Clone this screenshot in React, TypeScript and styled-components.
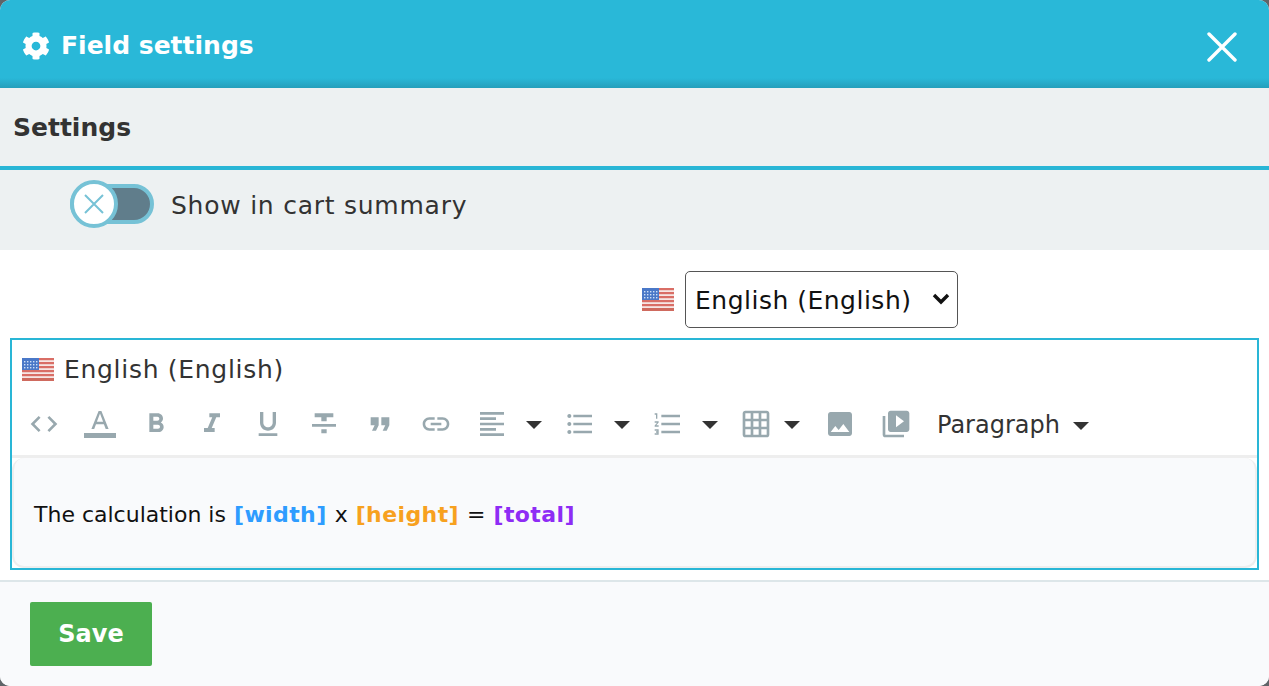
import React from "react";
import styled, { createGlobalStyle } from "styled-components";
import { FaCog } from "react-icons/fa";
import {
  MdCode,
  MdFormatAlignLeft,
  MdFormatBold,
  MdFormatItalic,
  MdFormatListBulleted,
  MdFormatListNumbered,
  MdFormatQuote,
  MdFormatStrikethrough,
  MdFormatUnderlined,
  MdGridOn,
  MdImage,
  MdLink,
  MdVideoLibrary
} from "react-icons/md";

const GlobalStyle = createGlobalStyle`
  html, body {
    margin: 0;
    padding: 0;
    background: #5f6468;
  }
  body {
    font-family: "DejaVu Sans", Verdana, sans-serif;
    color: #333;
  }
`;

const Modal = styled.div`
  width: 1269px;
  height: 686px;
  overflow: hidden;
  border-radius: 10px;
  background: #fff;
  display: flex;
  flex-direction: column;
`;

const Header = styled.header`
  height: 88px;
  flex: none;
  box-sizing: border-box;
  padding: 0 32px 0 22px;
  display: flex;
  align-items: center;
  justify-content: space-between;
  color: #fff;
  background: linear-gradient(to bottom, #29b8d8 0, #29b8d8 78px, #259fbb 88px);
`;

const Title = styled.h1`
  margin: 3px 0 0;
  display: flex;
  align-items: center;
  gap: 11px;
  font-size: 25px;
  line-height: 28px;
  font-weight: 700;
`;

const CloseButton = styled.button`
  padding: 0;
  border: 0;
  background: none;
  display: flex;
  margin-top: 6px;
`;

const SectionHead = styled.div`
  height: 78px;
  flex: none;
  display: flex;
  align-items: center;
  padding-left: 13px;
  background: #edf1f2;
  border-bottom: 4px solid #29b6d6;
  font-size: 25px;
  font-weight: 700;
  color: #333;
`;

const ToggleRow = styled.div`
  height: 80px;
  flex: none;
  display: flex;
  align-items: center;
  gap: 17px;
  padding-left: 70px;
  padding-bottom: 12px;
  box-sizing: border-box;
  background: #edf1f2;
  font-size: 25px;
  letter-spacing: 0.75px;
  color: #333;
`;

const ToggleLabel = styled.span`
  margin-top: 2px;
`;

const Toggle = styled.div`
  position: relative;
  width: 84px;
  height: 40px;
  box-sizing: border-box;
  border: 4px solid #76c2d6;
  border-radius: 20px;
  background: #607d8b;
`;

const Knob = styled.span`
  position: absolute;
  left: -4px;
  top: -8px;
  width: 48px;
  height: 48px;
  box-sizing: border-box;
  border: 4px solid #76c2d6;
  border-radius: 50%;
  background: #fff;
  display: flex;
  align-items: center;
  justify-content: center;
`;

const LanguageRow = styled.div`
  height: 88px;
  flex: none;
  box-sizing: border-box;
  display: flex;
  align-items: center;
  gap: 11px;
  padding: 10px 0 0 642px;
  background: #fff;
`;

const SelectWrap = styled.div`
  position: relative;
  display: flex;
`;

const SelectChevron = styled.svg`
  position: absolute;
  right: 8px;
  top: 22px;
  pointer-events: none;
`;

const LanguageSelect = styled.select`
  appearance: none;
  width: 273px;
  height: 57px;
  box-sizing: border-box;
  padding: 3px 9px 0;
  font-family: inherit;
  font-size: 25px;
  letter-spacing: 0.5px;
  color: #111;
  background: #fff;
  border: 1px solid #555;
  border-radius: 5px;
`;

const EditorBox = styled.div`
  margin: 0 10px 10px;
  height: 232px;
  flex: none;
  box-sizing: border-box;
  border: 2px solid #29b6d6;
  background: #fff;
  display: flex;
  flex-direction: column;
`;

const EditorLang = styled.div`
  height: 58px;
  flex: none;
  display: flex;
  align-items: center;
  gap: 10px;
  padding-left: 10px;
  font-size: 25px;
  letter-spacing: 0.7px;
  color: #333;
`;

const Toolbar = styled.div`
  height: 60px;
  flex: none;
  box-sizing: border-box;
  padding: 0 0 5px 4px;
  display: flex;
  align-items: center;
  border-bottom: 3px solid #eee;
`;

const ToolButton = styled.span`
  width: 56px;
  height: 40px;
  flex: none;
  display: flex;
  align-items: center;
  justify-content: center;
  color: #98a8ae;
`;

const Caret = styled.span<{ $before?: number; $after?: number }>`
  width: 0;
  height: 0;
  flex: none;
  margin: 2px ${(p) => p.$after ?? 10}px 0 ${(p) => p.$before ?? 6}px;
  border-left: 8px solid transparent;
  border-right: 8px solid transparent;
  border-top: 8px solid #333;
`;

const Paragraph = styled.span`
  margin: 2px 0 0 13px;
  display: flex;
  align-items: center;
  gap: 13px;
  font-size: 24px;
  color: #333;
  & > i {
    display: block;
    margin-top: 2px;
    border-left: 8px solid transparent;
    border-right: 8px solid transparent;
    border-top: 8px solid #333;
  }
`;

const Content = styled.div`
  flex: 1;
  box-sizing: border-box;
  padding: 43px 0 0 20px;
  line-height: 28px;
  background: #f9fafc;
  border: 2px solid #eee;
  border-top: 0;
  border-radius: 12px;
  font-size: 22px;
  color: #111;
`;

const Token = styled.b<{ $color: string }>`
  margin: 0 1px;
  font-weight: 700;
  letter-spacing: 0.4px;
  color: ${(p) => p.$color};
`;

const Footer = styled.footer`
  flex: 1;
  box-sizing: border-box;
  border-top: 2px solid #dde6e9;
  background: #f9fafc;
  padding: 20px 30px;
`;

const SaveButton = styled.button`
  width: 122px;
  height: 64px;
  border: 0;
  border-radius: 2px;
  background: #4caf50;
  color: #fff;
  font-family: inherit;
  font-size: 24px;
  font-weight: 700;
`;

const Flag = () => (
  <svg width="32" height="23" viewBox="0 0 32 23" style={{ filter: "blur(0.6px)", flex: "none" }}>
    <rect width="32" height="23" fill="#f6e6e4" />
    {[0, 1, 2, 3, 4, 5].map((i) => (
      <rect key={i} y={i * 4} width="32" height="2.2" fill="#d96e66" />
    ))}
    <rect y="20" width="32" height="3" fill="#cf6a5e" />
    <rect width="17" height="12" fill="#4a78c8" />
    {[2, 5, 8, 11, 14].map((x) =>
      [3, 6, 9].map((y) => <rect key={`${x}-${y}`} x={x} y={y} width="1.4" height="1.4" fill="#cfe0f5" />)
    )}
  </svg>
);

const TextColorIcon = () => (
  <svg width="32" height="32" viewBox="0 0 32 32" fill="#98a8ae">
    <path d="M14.6 3h2.8l7.2 18h-2.9l-1.8-4.8h-7.9L10.200 21H7.400zM12.900 13.800h6.200L16 5.600z" />
    <rect y="25" width="32" height="5" />
  </svg>
);

const tools = [
  <MdFormatBold size={32} key="b" />,
  <MdFormatItalic size={32} key="i" />,
  <MdFormatUnderlined size={32} key="u" />,
  <MdFormatStrikethrough size={32} key="s" />,
  <MdFormatQuote size={32} key="q" />,
  <MdLink size={32} key="l" />
];

const App: React.FC = () => {
  return (
    <Modal>
      <GlobalStyle />
      <Header>
        <Title>
          <FaCog size={28} />
          Field settings
        </Title>
        <CloseButton>
          <svg width="30" height="30" viewBox="0 0 30 30" stroke="#fff" strokeWidth="3.4" strokeLinecap="round">
            <path d="M2 2l26 26M28 2L2 28" />
          </svg>
        </CloseButton>
      </Header>
      <SectionHead>Settings</SectionHead>
      <ToggleRow>
        <Toggle>
          <Knob>
            <svg width="22" height="22" viewBox="0 0 22 22" stroke="#76c2d6" strokeWidth="2">
              <path d="M2 2l18 18M20 2L2 20" />
            </svg>
          </Knob>
        </Toggle>
        <ToggleLabel>Show in cart summary</ToggleLabel>
      </ToggleRow>
      <LanguageRow>
        <Flag />
        <SelectWrap>
          <LanguageSelect defaultValue="en">
            <option value="en">English (English)</option>
          </LanguageSelect>
          <SelectChevron width="18" height="12" viewBox="0 0 18 12" fill="none" stroke="#111" strokeWidth="3.4">
            <path d="M2 2l7 7 7-7" />
          </SelectChevron>
        </SelectWrap>
      </LanguageRow>
      <EditorBox>
        <EditorLang>
          <Flag />
          English (English)
        </EditorLang>
        <Toolbar>
          <ToolButton>
            <MdCode size={32} />
          </ToolButton>
          <ToolButton>
            <TextColorIcon />
          </ToolButton>
          {tools.map((icon) => (
            <ToolButton key={icon.key}>{icon}</ToolButton>
          ))}
          <ToolButton>
            <MdFormatAlignLeft size={32} />
          </ToolButton>
          <Caret />
          <ToolButton>
            <MdFormatListBulleted size={32} />
          </ToolButton>
          <Caret />
          <ToolButton>
            <MdFormatListNumbered size={32} />
          </ToolButton>
          <Caret />
          <ToolButton>
            <MdGridOn size={32} />
          </ToolButton>
          <Caret $before={0} $after={12} />
          <ToolButton>
            <MdImage size={32} />
          </ToolButton>
          <ToolButton>
            <MdVideoLibrary size={32} />
          </ToolButton>
          <Paragraph>
            Paragraph
            <i />
          </Paragraph>
        </Toolbar>
        <Content>
          The calculation is <Token $color="#2e9cff">[width]</Token> x <Token $color="#f7a11f">[height]</Token> ={" "}
          <Token $color="#8e2cf5">[total]</Token>
        </Content>
      </EditorBox>
      <Footer>
        <SaveButton>Save</SaveButton>
      </Footer>
    </Modal>
  );
};

export default App;
